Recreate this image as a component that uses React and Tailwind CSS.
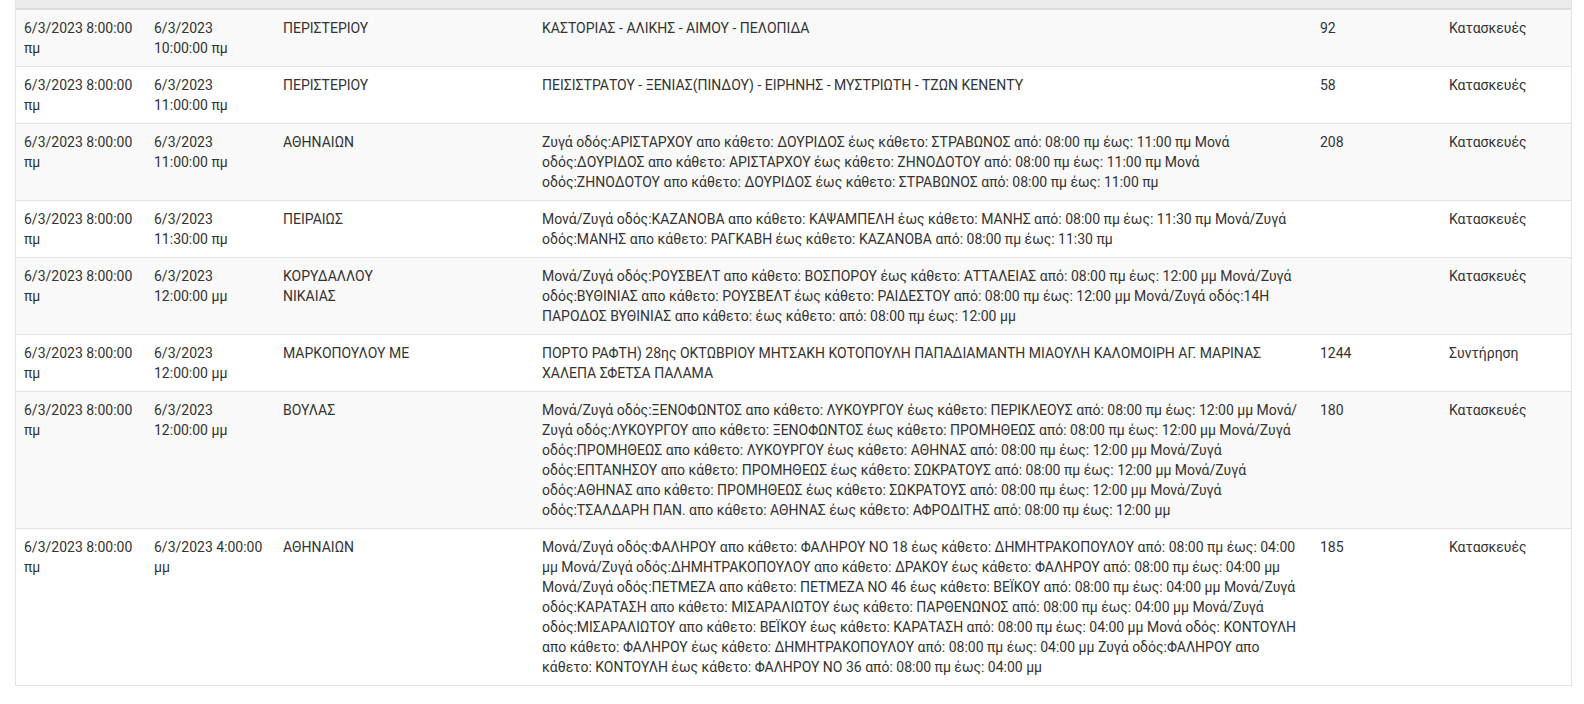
import React from "react";

const widths = ["w-[130px]", "w-[129px]", "w-[259px]", "w-[778px]", "w-[129px]", "w-[130px]"];

const rows = [
  ["6/3/2023 8:00:00 πμ", "6/3/2023 10:00:00 πμ", "ΠΕΡΙΣΤΕΡΙΟΥ", "ΚΑΣΤΟΡΙΑΣ - ΑΛΙΚΗΣ - ΑΙΜΟΥ - ΠΕΛΟΠΙΔΑ", "92", "Κατασκευές"],
  ["6/3/2023 8:00:00 πμ", "6/3/2023 11:00:00 πμ", "ΠΕΡΙΣΤΕΡΙΟΥ", "ΠΕΙΣΙΣΤΡΑΤΟΥ - ΞΕΝΙΑΣ(ΠΙΝΔΟΥ) - ΕΙΡΗΝΗΣ - ΜΥΣΤΡΙΩΤΗ - ΤΖΩΝ ΚΕΝΕΝΤΥ", "58", "Κατασκευές"],
  ["6/3/2023 8:00:00 πμ", "6/3/2023 11:00:00 πμ", "ΑΘΗΝΑΙΩΝ", "Ζυγά οδός:ΑΡΙΣΤΑΡΧΟΥ απο κάθετο: ΔΟΥΡΙΔΟΣ έως κάθετο: ΣΤΡΑΒΩΝΟΣ από: 08:00 πμ έως: 11:00 πμ Μονά οδός:ΔΟΥΡΙΔΟΣ απο κάθετο: ΑΡΙΣΤΑΡΧΟΥ έως κάθετο: ΖΗΝΟΔΟΤΟΥ από: 08:00 πμ έως: 11:00 πμ Μονά οδός:ΖΗΝΟΔΟΤΟΥ απο κάθετο: ΔΟΥΡΙΔΟΣ έως κάθετο: ΣΤΡΑΒΩΝΟΣ από: 08:00 πμ έως: 11:00 πμ", "208", "Κατασκευές"],
  ["6/3/2023 8:00:00 πμ", "6/3/2023 11:30:00 πμ", "ΠΕΙΡΑΙΩΣ", "Μονά/Ζυγά οδός:ΚΑΖΑΝΟΒΑ απο κάθετο: ΚΑΨΑΜΠΕΛΗ έως κάθετο: ΜΑΝΗΣ από: 08:00 πμ έως: 11:30 πμ Μονά/Ζυγά οδός:ΜΑΝΗΣ απο κάθετο: ΡΑΓΚΑΒΗ έως κάθετο: ΚΑΖΑΝΟΒΑ από: 08:00 πμ έως: 11:30 πμ", "", "Κατασκευές"],
  ["6/3/2023 8:00:00 πμ", "6/3/2023 12:00:00 μμ", "ΚΟΡΥΔΑΛΛΟΥ\nΝΙΚΑΙΑΣ", "Μονά/Ζυγά οδός:ΡΟΥΣΒΕΛΤ απο κάθετο: ΒΟΣΠΟΡΟΥ έως κάθετο: ΑΤΤΑΛΕΙΑΣ από: 08:00 πμ έως: 12:00 μμ Μονά/Ζυγά οδός:ΒΥΘΙΝΙΑΣ απο κάθετο: ΡΟΥΣΒΕΛΤ έως κάθετο: ΡΑΙΔΕΣΤΟΥ από: 08:00 πμ έως: 12:00 μμ Μονά/Ζυγά οδός:14Η ΠΑΡΟΔΟΣ ΒΥΘΙΝΙΑΣ απο κάθετο: έως κάθετο: από: 08:00 πμ έως: 12:00 μμ", "", "Κατασκευές"],
  ["6/3/2023 8:00:00 πμ", "6/3/2023 12:00:00 μμ", "ΜΑΡΚΟΠΟΥΛΟΥ ΜΕ", "ΠΟΡΤΟ ΡΑΦΤΗ) 28ης ΟΚΤΩΒΡΙΟΥ ΜΗΤΣΑΚΗ ΚΟΤΟΠΟΥΛΗ ΠΑΠΑΔΙΑΜΑΝΤΗ ΜΙΑΟΥΛΗ ΚΑΛΟΜΟΙΡΗ ΑΓ. ΜΑΡΙΝΑΣ ΧΑΛΕΠΑ ΣΦΕΤΣΑ ΠΑΛΑΜΑ", "1244", "Συντήρηση"],
  ["6/3/2023 8:00:00 πμ", "6/3/2023 12:00:00 μμ", "ΒΟΥΛΑΣ", "Μονά/Ζυγά οδός:ΞΕΝΟΦΩΝΤΟΣ απο κάθετο: ΛΥΚΟΥΡΓΟΥ έως κάθετο: ΠΕΡΙΚΛΕΟΥΣ από: 08:00 πμ έως: 12:00 μμ Μονά/Ζυγά οδός:ΛΥΚΟΥΡΓΟΥ απο κάθετο: ΞΕΝΟΦΩΝΤΟΣ έως κάθετο: ΠΡΟΜΗΘΕΩΣ από: 08:00 πμ έως: 12:00 μμ Μονά/Ζυγά οδός:ΠΡΟΜΗΘΕΩΣ απο κάθετο: ΛΥΚΟΥΡΓΟΥ έως κάθετο: ΑΘΗΝΑΣ από: 08:00 πμ έως: 12:00 μμ Μονά/Ζυγά οδός:ΕΠΤΑΝΗΣΟΥ απο κάθετο: ΠΡΟΜΗΘΕΩΣ έως κάθετο: ΣΩΚΡΑΤΟΥΣ από: 08:00 πμ έως: 12:00 μμ Μονά/Ζυγά οδός:ΑΘΗΝΑΣ απο κάθετο: ΠΡΟΜΗΘΕΩΣ έως κάθετο: ΣΩΚΡΑΤΟΥΣ από: 08:00 πμ έως: 12:00 μμ Μονά/Ζυγά οδός:ΤΣΑΛΔΑΡΗ ΠΑΝ. απο κάθετο: ΑΘΗΝΑΣ έως κάθετο: ΑΦΡΟΔΙΤΗΣ από: 08:00 πμ έως: 12:00 μμ", "180", "Κατασκευές"],
  ["6/3/2023 8:00:00 πμ", "6/3/2023 4:00:00 μμ", "ΑΘΗΝΑΙΩΝ", "Μονά/Ζυγά οδός:ΦΑΛΗΡΟΥ απο κάθετο: ΦΑΛΗΡΟΥ ΝΟ 18 έως κάθετο: ΔΗΜΗΤΡΑΚΟΠΟΥΛΟΥ από: 08:00 πμ έως: 04:00 μμ Μονά/Ζυγά οδός:ΔΗΜΗΤΡΑΚΟΠΟΥΛΟΥ απο κάθετο: ΔΡΑΚΟΥ έως κάθετο: ΦΑΛΗΡΟΥ από: 08:00 πμ έως: 04:00 μμ Μονά/Ζυγά οδός:ΠΕΤΜΕΖΑ απο κάθετο: ΠΕΤΜΕΖΑ ΝΟ 46 έως κάθετο: ΒΕΪΚΟΥ από: 08:00 πμ έως: 04:00 μμ Μονά/Ζυγά οδός:ΚΑΡΑΤΑΣΗ απο κάθετο: ΜΙΣΑΡΑΛΙΩΤΟΥ έως κάθετο: ΠΑΡΘΕΝΩΝΟΣ από: 08:00 πμ έως: 04:00 μμ Μονά/Ζυγά οδός:ΜΙΣΑΡΑΛΙΩΤΟΥ απο κάθετο: ΒΕΪΚΟΥ έως κάθετο: ΚΑΡΑΤΑΣΗ από: 08:00 πμ έως: 04:00 μμ Μονά οδός: ΚΟΝΤΟΥΛΗ απο κάθετο: ΦΑΛΗΡΟΥ έως κάθετο: ΔΗΜΗΤΡΑΚΟΠΟΥΛΟΥ από: 08:00 πμ έως: 04:00 μμ Ζυγά οδός:ΦΑΛΗΡΟΥ απο κάθετο: ΚΟΝΤΟΥΛΗ έως κάθετο: ΦΑΛΗΡΟΥ ΝΟ 36 από: 08:00 πμ έως: 04:00 μμ", "185", "Κατασκευές"],
];

export default function App() {
  return (
    <div className="min-h-[704px] bg-white" style={{ fontFamily: "Roboto, 'Liberation Sans', sans-serif" }}>
      <div className="ml-[15px] w-[1557px] border-x border-b border-[#e3e3e3]">
        <table className="w-[1555px] table-fixed border-separate border-spacing-0 text-[14px] leading-[20px] text-[#333]">
          <colgroup>
            {widths.map((w, i) => (
              <col key={i} className={w} />
            ))}
          </colgroup>
          <thead>
            <tr className="bg-[#ececec]">
              {widths.map((w, i) => (
                <th key={i} className={`${w} h-[10px] border-b-2 border-[#dcdcdc] p-0`}></th>
              ))}
            </tr>
          </thead>
          <tbody>
            {rows.map((r, i) => (
              <tr key={i} className={i % 2 === 0 ? "bg-[#f9f9f9]" : "bg-white"}>
                {r.map((c, j) => (
                  <td
                    key={j}
                    className={`${i > 0 ? "border-t border-[#e3e3e3]" : ""} p-2 align-top text-left font-normal whitespace-pre-line`}
                  >
                    {c}
                  </td>
                ))}
              </tr>
            ))}
          </tbody>
        </table>
      </div>
    </div>
  );
}
